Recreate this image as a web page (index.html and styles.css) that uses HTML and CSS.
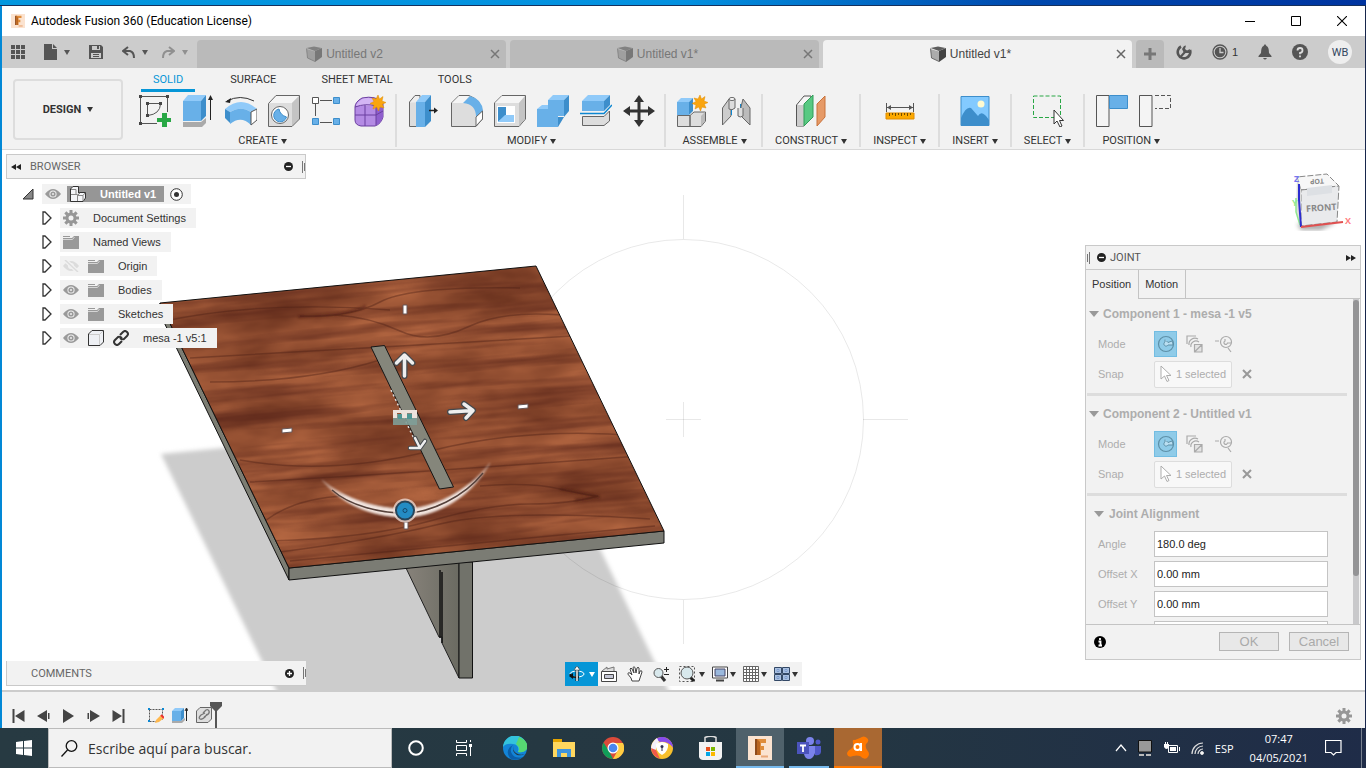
FILE: index.html
```html
<!DOCTYPE html>
<html lang="en">
<head>
    <meta charset="UTF-8">
    <meta name="viewport" content="width=device-width, initial-scale=1.0">
    <title>Autodesk Fusion 360 (Education License)</title>
    <link rel="stylesheet" href="styles.css">
</head>
<body>
    <!-- Shared icons -->
    <svg class="defs" aria-hidden="true">
        <symbol id="cube" viewBox="0 0 16 16"><path d="M.5 2 8 .5 15.500 2 9 5z" fill="currentColor" opacity=".85"/><path d="M.5 3 9 5.500V15.500L1.500 12z" fill="currentColor" opacity=".4"/><path d="M9 5 16 2V11L9 16z" fill="currentColor"/><path d="M.5 2.500 1.500 12 9 15.500" fill="none" stroke="currentColor" opacity=".7"/></symbol>
        <symbol id="close" viewBox="0 0 10 10"><path d="M1 1 9 9M9 1 1 9" stroke="currentColor" stroke-width="1.500" fill="none"/></symbol>
        <symbol id="eye" viewBox="0 0 16 12"><path d="M0 6Q8-4 16 6 8 16 0 6z" fill="#9a9a9a"/><circle cx="8" cy="6" r="3.600" fill="#eee"/><circle cx="8" cy="6" r="2.600" fill="#9a9a9a"/><circle cx="8" cy="6" r="1" fill="#eee"/></symbol>
        <symbol id="eye-off" viewBox="0 0 16 12"><path d="M0 6Q8-4 16 6 8 16 0 6z" fill="#dcdcdc"/><circle cx="8" cy="6" r="3" fill="#f2f2f2"/><circle cx="8" cy="6" r="1.600" fill="#dcdcdc"/><path d="M2 0 15 12" stroke="#f2f2f2" stroke-width="4"/><path d="M2 0 15 12" stroke="#dcdcdc" stroke-width="1.500"/></symbol>
        <symbol id="folder" viewBox="0 0 16 13"><path d="M0 0H7V1H0zM0 2H9L11 0H16V13H0z" fill="#999"/><path d="M0 3.500H9.500L11.500 1" stroke="#d5d5d5" fill="none"/></symbol>
        <symbol id="gear" viewBox="0 0 16 16"><g fill="#979797"><circle cx="8" cy="8" r="5.500"/><path d="M6.500 0H9.500V16H6.500zM0 6.500H16V9.500H0z"/><path d="M6.500 0H9.500V16H6.500zM0 6.500H16V9.500H0z" transform="rotate(45 8 8)"/></g><circle cx="8" cy="8" r="2.500" fill="#f2f2f2"/></symbol>
        <symbol id="expand" viewBox="0 0 10 14"><path d="M1 1 3 1 9 7 3 13 1 13z" fill="#fff" stroke="#333" stroke-width="1.300"/></symbol>
        <symbol id="minus-dot" viewBox="0 0 9 9"><circle cx="4.500" cy="4.500" r="4.500" fill="#222"/><path d="M2 4.500H7" stroke="#fff" stroke-width="1.300"/></symbol>
        <symbol id="plus-dot" viewBox="0 0 9 9"><circle cx="4.500" cy="4.500" r="4.500" fill="#222"/><path d="M2 4.500H7M4.500 2V7" stroke="#fff" stroke-width="1.300"/></symbol>
        <symbol id="dbl" viewBox="0 0 10 6"><path d="M0 0 5 3 0 6zM5 0 10 3 5 6z" fill="#222"/></symbol>
        <symbol id="grip" viewBox="0 0 3 12"><path d="M.5 0V12M2.500 2V10" stroke="#777"/></symbol>
        <symbol id="mode-simple" viewBox="0 0 18 18"><circle cx="9" cy="9" r="7.500" fill="none" stroke="#5d90a8" stroke-width="1.200"/><path d="M8 4.500V7A2.200 2.200 0 1 0 11 10H16A7 7 0 0 0 15 6L11 7.500 9.500 6" fill="#b9def1" stroke="#5d90a8"/></symbol>
        <symbol id="mode-between" viewBox="0 0 18 18"><g fill="none" stroke="#aaa" stroke-width="1.200"><path d="M1 9V1H10M3 10A6 6 0 0 1 12 4M5 12A5 5 0 0 1 13 7"/><path d="M8.500 9.500H16V17H8.500zM8.500 17 16 9.500" fill="#e4e4e4"/></g></symbol>
        <symbol id="mode-two" viewBox="0 0 18 18"><g fill="none" stroke="#aaa" stroke-width="1.200"><path d="M0 6H4M13 13 16 17"/><circle cx="11" cy="7" r="5.500"/><path d="M10 4V6A1.800 1.800 0 1 0 12.500 8H16"/></g></symbol>
        <symbol id="cursor" viewBox="0 0 12 18"><path d="M1 1V14L4.500 11 7 16.500 9 15.500 6.500 10.500H11z" fill="#fff" stroke="currentColor"/></symbol>
        <symbol id="fusion" viewBox="0 0 24 24"><rect width="24" height="24" fill="#fbe3d0"/><path d="M7 3H10V19H7z" fill="#8f4a1a"/><path d="M9 3H18V7H13V10H16V14H13V19H9z" fill="#df8d3c"/><path d="M9 3 12 6V19H9z" fill="#b96420"/><path d="M13 20.500H20" stroke="#e9a779" stroke-width="2"/></symbol>
        <symbol id="star" viewBox="0 0 16 16"><path d="M8 0 9.500 4 13 1.500 12 6 16 7.500 12.300 9.200 14 13 10 12 8.500 16 6.700 12 3 14 4 10 0 8.500 4 6.500 2 3 6 4z" fill="#f9a510" stroke="#e08c00" stroke-width=".5"/></symbol>
    </svg>

    <div class="desktop-edge"></div>
    <div class="window">
        <header class="titlebar">
            <svg class="app-icon" width="14" height="14"><use href="#fusion"/></svg>
            <h1>Autodesk Fusion 360 (Education License)</h1>
            <div class="window-buttons">
                <button aria-label="Minimize"><svg width="10" height="10"><path d="M0 5.500H10" stroke="#000"/></svg></button>
                <button aria-label="Maximize"><svg width="10" height="10"><path d="M.5.5H9.500V9.500H.5z" stroke="#000" fill="none"/></svg></button>
                <button aria-label="Close"><svg width="10" height="10"><path d="M0 0 10 10M10 0 0 10" stroke="#000" stroke-width="1.100"/></svg></button>
            </div>
        </header>

        <div class="tabbar">
            <div class="quick-tools">
                <button aria-label="Data panel"><svg width="14" height="14" fill="#555"><path d="M0 0h4v4H0zM5 0h4v4H5zM10 0h4v4h-4zM0 5h4v4H0zM5 5h4v4H5zM10 5h4v4h-4zM0 10h4v4H0zM5 10h4v4H5zM10 10h4v4h-4z"/></svg></button>
                <button class="with-caret" aria-label="File"><svg width="13" height="16"><path d="M0 0H8V5H13V16H0z" fill="#555"/><path d="M9 0 13 4H9z" fill="#555"/></svg><span class="caret"></span></button>
                <button aria-label="Save"><svg width="14" height="14"><path d="M0 0H12L14 2V14H0z" fill="#555"/><path d="M3 1H11V5H3zM2 8H12V13H2z" fill="#ccc"/><path d="M8 1H10V4H8zM4 9H10V10H4zM4 11H10V12H4z" fill="#555"/></svg></button>
                <button class="with-caret" aria-label="Undo"><svg width="13" height="13"><path d="M6 1 1 5 6 9M1 5H8Q12 6 12 12" fill="none" stroke="#555" stroke-width="2"/></svg><span class="caret"></span></button>
                <button class="with-caret faded" aria-label="Redo"><svg width="13" height="13"><path d="M7 1 12 5 7 9M12 5H5Q1 6 1 12" fill="none" stroke="#555" stroke-width="2"/></svg><span class="caret"></span></button>
            </div>
            <div class="doc-tabs">
                <div class="doc-tab"><a href="#v2"><svg width="16" height="16"><use href="#cube"/></svg>Untitled v2</a><button aria-label="Close Untitled v2"><svg width="10" height="10"><use href="#close"/></svg></button></div>
                <div class="doc-tab"><a href="#v1"><svg width="16" height="16"><use href="#cube"/></svg>Untitled v1*</a><button aria-label="Close Untitled v1"><svg width="10" height="10"><use href="#close"/></svg></button></div>
                <div class="doc-tab active"><a href="#v1b"><svg width="16" height="16"><use href="#cube"/></svg>Untitled v1*</a><button aria-label="Close Untitled v1"><svg width="10" height="10"><use href="#close"/></svg></button></div>
                <button class="new-tab" aria-label="New design"><svg width="12" height="12"><path d="M6 0V12M0 6H12" stroke="#777" stroke-width="3"/></svg></button>
            </div>
            <div class="account">
                <button aria-label="Extensions"><svg width="16" height="16"><path d="M5 2.500A6.300 6.300 0 1 0 14 6" fill="none" stroke="#555" stroke-width="2.600"/><path d="M3 13 7.500 8 6 5 8 2 10 1.500 9 5 11 6.500 14 5 13 9 9.500 9 5 14z" fill="#555"/></svg></button>
                <button class="jobs" aria-label="Job status"><svg width="16" height="16"><circle cx="8" cy="8" r="7" fill="none" stroke="#555" stroke-width="1.300"/><circle cx="8" cy="8" r="5.300" fill="#555"/><path d="M8 4V8.500H11.500" stroke="#ccc" stroke-width="1.300" fill="none"/></svg>1</button>
                <button aria-label="Notifications"><svg width="14" height="16"><path d="M7 0 8.500 2Q11 3 11 9L13.500 12V13H.5V12L3 9Q3 3 5.500 2zM5 14H9Q7 17 5 14z" fill="#555"/></svg></button>
                <button aria-label="Help"><svg width="16" height="16"><circle cx="8" cy="8" r="8" fill="#555"/><path d="M5.500 6.500Q5.500 4 8 4T10.500 6.300 8 9V10.300M8 11.500V13.300" fill="none" stroke="#ddd" stroke-width="1.800"/></svg></button>
                <button class="avatar">WB</button>
            </div>
        </div>

        <div class="ribbon">
            <button class="design">DESIGN <span class="caret"></span></button>
            <div class="ribbon-main">
                <nav class="ribbon-tabs">
                    <a class="active" href="#solid">SOLID</a>
                    <a href="#surface">SURFACE</a>
                    <a href="#sheet">SHEET METAL</a>
                    <a href="#tools">TOOLS</a>
                </nav>
                <div class="groups">
                    <div class="group">
                        <div class="icons">
                            <svg width="32" height="32"><path d="M2 1.500H28.500V17M1.500 2V28.500H18" fill="none" stroke="#555"/><path d="M8.500 9V20M9 8.500H20M9 20.500Q21 19 21.500 9" fill="none" stroke="#555"/><path d="M0 0h3v3H0zM27 0h3v3h-3zM0 27h3v3H0zM7 7h3v3H7zM20 7h3v3h-3zM7 19h3v3H7z" fill="#444"/><path d="M23 18h5v5h4v4h-4v5h-5v-5h-5v-4h5z" fill="#28a745"/></svg>
                            <svg width="32" height="32"><path d="M1 27H19L24 23V28L20 32H1z" fill="#aaa"/><path d="M1 6H19V26H1z" fill="#68b0e8"/><path d="M1 6 6 0H24L19 6z" fill="#90caf9"/><path d="M19 6 24 0V21L19 26z" fill="#3d8ecb"/><path d="M28.500 2V25" stroke="#222"/><path d="M28.500 0 31 5H26z" fill="#222"/></svg>
                            <svg width="32" height="32"><path d="M2 6Q15-1 29 6" fill="none" stroke="#333"/><path d="M0 7 6 3 5 8z" fill="#222"/><path d="M0 14Q16 0 32 14L26 17Q16 10 5 17z" fill="#90caf9"/><path d="M0 14 5 17V28L0 23z" fill="#3d8ecb"/><path d="M5 17Q16 10 26 17V30Q16 20 5 29z" fill="#68b0e8"/><path d="M26 17 32 14V25L26 30z" fill="#fff" stroke="#555"/></svg>
                            <svg width="32" height="32"><path d="M.5 8.500 8 1H31V24L24 31H.5z" fill="#ddd"/><path d="M1 8 8 1H31L24 8z" fill="#f5f5f5"/><path d="M24 8 31 1V24L24 31z" fill="#c4c4c4"/><path d="M.5 8.500 8 .5H31.500V24L24 31.500H.5z" fill="none" stroke="#666"/><circle cx="12" cy="20" r="8.500" fill="#fff" stroke="#666"/><path d="M11 14A6.500 6.500 0 1 0 18.500 22Q12 20 11 14z" fill="#68b0e8" stroke="#3d8ecb"/></svg>
                            <svg width="32" height="32"><path d="M9 5.500H21M4.500 9V21M9 27.500H21" stroke="#555"/><path d="M1.500 2.500H7.500V8.500H1.500z" fill="#fff" stroke="#555"/><path d="M22.500 2.500h6v6h-6zM1.500 23.500h6v6h-6zM22.500 23.500h6v6h-6z" fill="#68b0e8" stroke="#3d8ecb"/></svg>
                            <svg width="32" height="32"><path d="M1 12Q1 7 8 3 22 0 29 8V22Q27 29 21 31H7Q1 30 1 25z" fill="#b48be4" stroke="#6b3fa0"/><path d="M2 12Q2 8 8 4 18 1 26 8L21 11H3z" fill="#d3b5f4"/><path d="M22 11 29 8V22Q26 29 22 30z" fill="#8f5fcd"/><path d="M11 10V31M1 20H22L29 16M22 10V30M1 12Q12 8 22 11" fill="none" stroke="#6b3fa0"/><use href="#star" x="16" y="0" width="16" height="16"/></svg>
                        </div>
                        <button>CREATE <span class="caret"></span></button>
                    </div>
                    <div class="group">
                        <div class="icons">
                            <svg width="32" height="32"><path d="M1.500 7 7 .5H12V31.500H1.500z" fill="#eee" stroke="#666"/><path d="M2 7.500H8V31H2z" fill="#ddd"/><path d="M8 7H17V32H8z" fill="#68b0e8"/><path d="M8 7 14 0H23L17 7z" fill="#90caf9"/><path d="M17 7 23 0V26L17 32z" fill="#3d8ecb"/><path d="M21 15.500H28" stroke="#222" stroke-width="1.500"/><path d="M26 12.500 30 15.500 26 18.500z" fill="#222"/></svg>
                            <svg width="32" height="32"><path d="M.5 8 8 .5H18Q31 5 31.500 20V24L25 31.500H.5z" fill="#ddd" stroke="#666"/><path d="M1 8 8 1H18L13 8z" fill="#f5f5f5"/><path d="M12 8 19 1Q31 4 32 16L25 22Q25 9 12 8z" fill="#68b0e8"/><path d="M25 22 31.500 16V24L25 31z" fill="#fff" stroke="#666"/></svg>
                            <svg width="32" height="32"><path d="M.5 8 8 .5H31.500V24L25 31.500H.5z" fill="#ddd" stroke="#666"/><path d="M1 8 8 1H31L25 8z" fill="#f5f5f5"/><path d="M25 8 31 1V24L25 31z" fill="#c4c4c4"/><path d="M3 11H21V28H3z" fill="#fff"/><path d="M4 12H12V20L4 27z" fill="#3d8ecb"/><path d="M4 27 11 20H20V27z" fill="#90caf9"/></svg>
                            <svg width="32" height="32"><path d="M11 5H27V21H21V32H0V14H11z" fill="#68b0e8"/><path d="M11 5 16 0H32L27 5zM0 14 5 10H11V14z" fill="#90caf9"/><path d="M27 5 32 0V16L27 22zM21 22H27L21 32z" fill="#3d8ecb"/></svg>
                            <svg width="32" height="32"><path d="M2 6H24V16H2z" fill="#68b0e8"/><path d="M2 6 8 0H30L24 6z" fill="#90caf9"/><path d="M24 6 30 0V10L24 16z" fill="#3d8ecb"/><path d="M0 18.500H24L32 10" fill="none" stroke="#0d87d1" stroke-width="1.500"/><path d="M2.500 21.500H24L29.500 16V26L24 30.500H2.500z" fill="#ddd" stroke="#666"/></svg>
                            <svg width="32" height="32"><path d="M16 4V28M4 16H28" stroke="#333" stroke-width="3"/><path d="M16 0 21 7H11zM16 32 11 25H21zM0 16 7 11V21zM32 16 25 11V21z" fill="#333"/></svg>
                        </div>
                        <button>MODIFY <span class="caret"></span></button>
                    </div>
                    <div class="group">
                        <div class="icons">
                            <svg width="32" height="32"><path d="M.5 20.500H13V31.500H.5zM13 20.500 17 17H28.500V26L24 31.500H13z" fill="#ddd" stroke="#666"/><path d="M24 21 28 17V26L24 31z" fill="#bbb"/><path d="M0 7H12V20H0z" fill="#68b0e8"/><path d="M0 7 4 3H16L12 7z" fill="#90caf9"/><path d="M12 7 16 3V16L12 20z" fill="#3d8ecb"/><use href="#star" x="15" y="0" width="16" height="16"/></svg>
                            <svg width="32" height="32"><path d="M2.500 13 9 4 11 5V21L2.500 30z" fill="#ccc" stroke="#666"/><path d="M9 4V14Q12 16 15 13V4" fill="#ddd" stroke="#666"/><ellipse cx="12" cy="4" rx="3" ry="1.500" fill="#fff" stroke="#666"/><path d="M11.500 15V20M20.500 9V13" stroke="#0d87d1"/><path d="M23 4 30 13V30L21 21V12z" fill="#bbb" stroke="#666"/><path d="M18 13V21Q20 23 23 21V13" fill="#ddd" stroke="#666"/></svg>
                        </div>
                        <button>ASSEMBLE <span class="caret"></span></button>
                    </div>
                    <div class="group single">
                        <div class="icons">
                            <svg width="32" height="32"><path d="M1.500 10 9 1H16V24L9 31H1.500z" fill="#f5f5f5" stroke="#555"/><path d="M2 10H9V31H2z" fill="#ccc"/><path d="M9 9 18 0V22L9 31z" fill="#58c982" stroke="#319c58"/><path d="M22 9 30 1V22L22 31z" fill="#e69a67" stroke="#c9723b"/></svg>
                        </div>
                        <button>CONSTRUCT <span class="caret"></span></button>
                    </div>
                    <div class="group single">
                        <div class="icons">
                            <svg width="32" height="32"><path d="M2.500 8V17M29.500 8V17M3 12.500H29" stroke="#555"/><path d="M3 12.500 7 10V15zM29 12.500 25 10V15z" fill="#555"/><path d="M2 18H30V24H2z" fill="#fca900" stroke="#e08c00"/><path d="M5.500 18V21M8.500 18V20M11.500 18V21M14.500 18V20M17.500 18V21M20.500 18V20M23.500 18V21M26.500 18V20" stroke="#704c00"/></svg>
                        </div>
                        <button>INSPECT <span class="caret"></span></button>
                    </div>
                    <div class="group single">
                        <div class="icons">
                            <svg width="32" height="32"><path d="M2 1.500H30V30.500H2z" fill="#83caff" stroke="#3d8ecb"/><path d="M2 23Q7 11 12 13L19 21Q23 14 30 25V30H2z" fill="#3d8ecb"/><circle cx="22" cy="9" r="3.500" fill="#fffbd0"/></svg>
                        </div>
                        <button>INSERT <span class="caret"></span></button>
                    </div>
                    <div class="group single">
                        <div class="icons">
                            <svg width="32" height="32"><path d="M1.500 1H28.500V22.500H1.500z" fill="none" stroke="#28a745" stroke-dasharray="4 2"/><path d="M22 15V29L25 26 28 32 30 31 27.500 25.500H31.500z" fill="#fff" stroke="#333"/></svg>
                        </div>
                        <button>SELECT <span class="caret"></span></button>
                    </div>
                    <div class="group last">
                        <div class="icons">
                            <svg width="32" height="32"><path d="M.5.5H13V31.500H.5z" fill="#f4f4f4" stroke="#555"/><path d="M13.500.5H31.500V13.500H13.500z" fill="#68b0e8" stroke="#3d8ecb"/></svg>
                            <svg width="32" height="32"><path d="M.5.5H13V31.500H.5z" fill="#f4f4f4" stroke="#555"/><path d="M16 .5H31.500V13.500H16" fill="none" stroke="#555" stroke-dasharray="4 2"/></svg>
                        </div>
                        <button>POSITION <span class="caret"></span></button>
                    </div>
                </div>
            </div>
        </div>

        <main class="viewport">
            <svg class="scene" viewBox="2 150 1363 540" preserveAspectRatio="xMinYMin slice" role="img" aria-label="Table model">
                <defs>
                    <filter id="wood" x="0" y="0" width="100%" height="100%" color-interpolation-filters="sRGB">
                        <feTurbulence type="fractalNoise" baseFrequency=".009 .025" numOctaves="4" seed="8"/>
                        <feColorMatrix values=".42 0 0 0 .38  .3 0 0 0 .17  .2 0 0 0 .1  0 0 0 0 1"/>
                    </filter>
                    <filter id="grain" x="0" y="0" width="100%" height="100%" color-interpolation-filters="sRGB">
                        <feTurbulence type="fractalNoise" baseFrequency=".006 .09" numOctaves="3" seed="21"/>
                        <feColorMatrix values="0 0 0 0 .33  0 0 0 0 .13  0 0 0 0 .09  1.500 0 0 0 -.63"/>
                    </filter>
                    <filter id="soft" x="-5%" y="-5%" width="110%" height="110%"><feGaussianBlur stdDeviation="2"/></filter>
                    <filter id="glow" x="-20%" y="-40%" width="140%" height="180%"><feGaussianBlur stdDeviation="1"/></filter>
                    <clipPath id="top"><path d="M160 303 536 266 664 531 289 568z"/></clipPath>
                    <linearGradient id="leg" x1="0" x2="1"><stop offset="0" stop-color="#87827a"/><stop offset="1" stop-color="#6b6b62"/></linearGradient>
                    <linearGradient id="fade" x1="0" x2="1"><stop offset="0" stop-color="#fff" stop-opacity=".2"/><stop offset=".15" stop-color="#f2e4de"/><stop offset=".85" stop-color="#f2e4de"/><stop offset="1" stop-color="#fff" stop-opacity=".2"/></linearGradient>
                </defs>
                <path d="M161 454 536 418 601 551 671 696H279z" fill="#ccc" filter="url(#soft)"/>
                <g fill="none" stroke="#000" stroke-opacity=".09">
                    <circle cx="683.500" cy="419.500" r="180"/>
                    <path d="M683.500 195V239M683.500 600V644M863 419.500H908M666 419.500H701M683.500 402V437"/>
                </g>
                <path d="M406 568 459 562V678L442 643V637L439 637z" fill="url(#leg)" stroke="#222"/>
                <path d="M459 562H472.500V678H459z" fill="#71726a" stroke="#111"/>
                <path d="M440 570V638M442 572V643" stroke="#111" stroke-width="1.500"/>
                <path d="M160 303V314L289 580V568z" fill="#7c7d73" stroke="#111"/>
                <path d="M289 568 664 531V543L289 580z" fill="#7b7c74" stroke="#111"/>
                <g clip-path="url(#top)">
                    <g transform="rotate(-5 400 420)">
                        <rect x="100" y="220" width="620" height="400" filter="url(#wood)"/>
                        <rect x="100" y="220" width="620" height="400" filter="url(#grain)"/>
                    </g>
                    <g fill="none" stroke="#4c2016" stroke-width="1.500" opacity=".4">
                        <path d="M300 316Q350 318 380 302T520 288M335 315Q370 317 400 331T470 326T590 318"/>
                        <path d="M160 322Q260 300 390 310M190 358Q290 352 400 346T590 335M210 382Q310 382 380 360"/>
                        <path d="M240 460Q330 476 430 451T640 436M250 482Q360 476 500 466T640 456"/>
                        <path d="M265 521Q295 498 345 496M480 486Q530 482 560 489T598 496Q570 504 530 504T430 521T270 541"/>
                        <path d="M280 552Q380 539 440 524T650 519M290 561Q430 548 655 526"/>
                    </g>
                    <path d="M298 317Q345 316 366 306M560 489Q585 493 600 497M575 500 600 497" fill="none" stroke="#45190f" stroke-width="3" opacity=".45" filter="url(#glow)"/>
                </g>
                <path d="M160 303 536 266 664 531 289 568z" fill="none" stroke="#111"/>
                <path d="M371 347 384.500 345.500 453.500 487 439.500 489z" fill="#85867b" stroke="#161616"/>
                <path d="M391 390 415 441" stroke="#ddd" stroke-width="1.500" stroke-dasharray="2 3"/>
                <path d="M393 410H417V418H412V413H407V418H402V413H397V418H393z" fill="#ede3dd"/>
                <path d="M393 418H397V414H402V418H407V414H412V418H417V425H393z" fill="#7f9f98" opacity=".9"/>
                <path d="M398 414H402V419H398zM407 414H412V419H407z" fill="#4f9795"/>
                <g fill="none" stroke-linecap="round" stroke-linejoin="round">
                    <g stroke="#44484c" stroke-width="6"><path d="M404.500 376V356M396.500 363 404.500 355 412.500 363"/><path d="M450 412 473 410.500M464 404 473 410.500 466 418"/></g>
                    <g stroke="#eee" stroke-width="3.500"><path d="M404.500 376V356M396.500 363 404.500 355 412.500 363"/><path d="M450 412 473 410.500M464 404 473 410.500 466 418"/></g>
                    <path d="M415 438 420 448M410 448 420 448 425 441" stroke="#44484c" stroke-width="4.500"/>
                    <path d="M415 438 420 448M410 448 420 448 425 441" stroke="#eee" stroke-width="2.500"/>
                </g>
                <g fill="#fff" stroke="#655"><path d="M403 305H407V314H403z"/><path d="M518 405 528 404V408L518 409z"/><path d="M282 429 292 428V432L282 433z"/><path d="M404 522H408V529H404z"/></g>
                <path d="M322 480C345 508 378 517 405 517S470 500 490 463C468 492 432 509 405 509S345 500 322 480z" fill="url(#fade)" stroke="url(#fade)" stroke-width="1" filter="url(#glow)"/>
                <path d="M332 490C350 506 380 513 405 513S464 497 483 473" fill="none" stroke="#56423c" stroke-width="1.500"/>
                <circle cx="405" cy="510.500" r="12" fill="#f0dfd8" opacity=".75"/>
                <circle cx="405" cy="510.500" r="9" fill="#248cc4" stroke="#27455a" stroke-width="2"/>
                <circle cx="405" cy="510.500" r="2" fill="none" stroke="#15486c"/>
            </svg>

            <aside class="left-panels">
                <section class="browser">
                    <header class="panel-bar">
                        <svg class="flip" width="10" height="6"><use href="#dbl"/></svg>
                        <h2>BROWSER</h2>
                        <svg width="9" height="9"><use href="#minus-dot"/></svg>
                        <svg width="3" height="12"><use href="#grip"/></svg>
                    </header>
                    <ul class="tree">
                        <li class="root"><svg width="12" height="12"><path d="M11 1V11H1z" fill="#888" stroke="#333"/></svg>
                            <span class="chip"><svg width="16" height="12"><use href="#eye"/></svg>
                                <span class="selected"><svg width="16" height="16"><path d="M.5 3 3 .5H8.500V7L10 6.500H15.500V12L13 15.500H.5z" fill="#f4f5f8" stroke="#333"/><path d="M1 8.500H7.500V15M7.500 9.500 10 7M7.500 9.500H13V15M13 9.500 15 7M1 3.500H6V8" stroke="#888" fill="none"/></svg>Untitled v1</span>
                                <svg width="13" height="13"><circle cx="6.500" cy="6.500" r="5.800" fill="#fff" stroke="#333"/><circle cx="6.500" cy="6.500" r="2.500" fill="#333"/></svg>
                            </span></li>
                        <li><svg width="10" height="14"><use href="#expand"/></svg><span class="chip"><svg width="16" height="16"><use href="#gear"/></svg><span class="name">Document Settings</span></span></li>
                        <li><svg width="10" height="14"><use href="#expand"/></svg><span class="chip"><svg width="16" height="13"><use href="#folder"/></svg><span class="name">Named Views</span></span></li>
                        <li><svg width="10" height="14"><use href="#expand"/></svg><span class="chip"><svg width="16" height="12"><use href="#eye-off"/></svg><svg width="16" height="13"><use href="#folder"/></svg><span class="name">Origin</span></span></li>
                        <li><svg width="10" height="14"><use href="#expand"/></svg><span class="chip"><svg width="16" height="12"><use href="#eye"/></svg><svg width="16" height="13"><use href="#folder"/></svg><span class="name">Bodies</span></span></li>
                        <li><svg width="10" height="14"><use href="#expand"/></svg><span class="chip"><svg width="16" height="12"><use href="#eye"/></svg><svg width="16" height="13"><use href="#folder"/></svg><span class="name">Sketches</span></span></li>
                        <li><svg width="10" height="14"><use href="#expand"/></svg><span class="chip"><svg width="16" height="12"><use href="#eye"/></svg><svg width="16" height="16"><path d="M.5 4 4 .5H15.500V12L12 15.500H.5z" fill="#eef0f4" stroke="#333"/><path d="M1 4.500H11.500V15M11.500 4.500 15 1" fill="none" stroke="#ccc"/></svg><svg width="16" height="16" fill="none" stroke="#333" stroke-width="2"><path d="M7 5 10 2Q12 0 14 2T14 6L11 9Q9 10 7 8M9 11 6 14Q4 16 2 14T2 10L5 7Q7 6 9 8"/></svg><span class="name">mesa -1 v5:1</span></span></li>
                    </ul>
                </section>
                <section class="comments panel-bar">
                    <h2>COMMENTS</h2>
                    <svg width="9" height="9"><use href="#plus-dot"/></svg>
                    <svg width="3" height="12"><use href="#grip"/></svg>
                </section>
            </aside>

            <div class="nav-tools">
                <button class="orbit" aria-label="Orbit"><svg width="16" height="16"><ellipse cx="8" cy="8" rx="7" ry="3" fill="none" stroke="#fff"/><path d="M1 8Q2 12 10 11" fill="none" stroke="#111" stroke-width="1.500"/><path d="M0 10 4 7V13z" fill="#111"/><path d="M8 1V15" stroke="#111" stroke-width="3"/><path d="M8 1V15" stroke="#fff" stroke-width="1.500"/><path d="M5 4 8 0 11 4z" fill="#fff" stroke="#333" stroke-width=".5"/></svg><span class="caret"></span></button>
                <button aria-label="Look at"><svg width="16" height="16"><path d="M.5 5.500H15.500V15.500H.5z" fill="#fff" stroke="#444"/><path d="M3.500 8.500H12.500V12.500H3.500z" fill="#c3c5d4" stroke="#444"/><path d="M1 5 6 1V3L13 1V5" fill="#ddd" stroke="#777"/></svg></button>
                <button aria-label="Pan"><svg width="16" height="16"><path d="M5 15 4 12 .8 8Q1 6 3 7L5 9 3 3Q4 1 5 3L7 7 6 1.500Q7 0 8 1.500L9 7 10 2Q11 .5 12 2V8L13 5Q15 4 15 6L13 12 12 15z" fill="#fff" stroke="#444"/></svg></button>
                <button aria-label="Zoom"><svg width="16" height="16"><path d="M8 10 12 15" stroke="#333" stroke-width="3"/><circle cx="5.500" cy="7" r="4.500" fill="#d8e8ec" stroke="#555"/><path d="M11 3.500H16M13.500 1V6M11 8.500H16" stroke="#222"/></svg></button>
                <button class="with-caret" aria-label="Fit"><svg width="16" height="16"><path d="M.5.5H15.500V15.500H.5z" fill="none" stroke="#555" stroke-dasharray="2 2"/><path d="M11 11 15 15" stroke="#222" stroke-width="3"/><circle cx="8" cy="7" r="6" fill="#d8e8ec" stroke="#555"/></svg><span class="caret"></span></button>
                <button class="with-caret tight" aria-label="Display settings"><svg width="16" height="16"><path d="M.5 1H15.500V12H.5z" fill="#fff" stroke="#444"/><path d="M3 3H13V10H3z" fill="#9bb9dd" stroke="#446"/><path d="M4 14.500H12" stroke="#444" stroke-width="2"/></svg><span class="caret"></span></button>
                <button class="with-caret tight" aria-label="Grid and snaps"><svg width="16" height="16"><path d="M.5.5H15.500V15.500H.5zM3.500 0V16M6.500 0V16M9.500 0V16M12.500 0V16M0 3.500H16M0 6.500H16M0 9.500H16M0 12.500H16" fill="#fff" stroke="#666"/></svg><span class="caret"></span></button>
                <button class="with-caret tight" aria-label="Viewports"><svg width="16" height="14"><path d="M.5.500h7v6h-7zM8.500.500h7v6h-7zM.5 7.500h7v6h-7zM8.500 7.500h7v6h-7z" fill="#a9c0e0" stroke="#334866"/><path d="M3 2.500h2v2h-2zM11 2.500h2v2h-2zM3 9.500h2v2h-2zM11 9.500h2v2h-2z" fill="#c5d6ee" stroke="#7b9acc"/></svg><span class="caret"></span></button>
            </div>

            <aside class="right-panels">
                <svg class="viewcube" width="64" height="62" viewBox="1291 170 64 62">
                    <path d="M1298 224 1338 222 1344 219 1322 230 1302 230z" fill="#aaa" filter="url(#soft)"/>
                    <path d="M1302 190 1298 177 1328 174 1340 186z" fill="#f7f7f7" stroke="#888" stroke-dasharray="6 2"/>
                    <path d="M1302 190 1340 186 1338 222 1302 226z" fill="#e9eaec" stroke="#888" stroke-dasharray="7 2"/>
                    <path d="M1298 177 1302 190V226L1297 212z" fill="#ddd"/>
                    <path d="M1308 188 1333 185V193L1308 196z" fill="#dde0e4"/>
                    <path d="M1297 198V212L1301 225" fill="none" stroke="#8fe88f" stroke-width="1.500"/>
                    <path d="M1300 184V200L1302 227" stroke="#2c2cd0" stroke-width="2" fill="none"/>
                    <path d="M1302 227 1344 222" stroke="#e05050" stroke-width="2"/>
                    <g class="cube-text">
                        <text x="1307" y="211" transform="rotate(-4 1320 208)">FRONT</text>
                        <text class="cube-top" x="1309" y="185" transform="rotate(176 1317 182)">TOP</text>
                        <text class="axis-z" x="1295" y="182">Z</text>
                        <text class="axis-y" x="1293" y="206">Y</text>
                        <text class="axis-x" x="1346" y="224">X</text>
                    </g>
                </svg>
                <section class="joint">
                    <header><svg width="3" height="12" class="flip"><use href="#grip"/></svg><svg width="9" height="9"><use href="#minus-dot"/></svg><h2>JOINT</h2><svg width="10" height="6"><use href="#dbl"/></svg></header>
                    <nav><a class="active" href="#position">Position</a><a href="#motion">Motion</a></nav>
                    <div class="joint-body">
                        <div class="joint-fields">
                            <h3><span class="caret"></span>Component 1 - mesa -1 v5</h3>
                            <div class="field"><span>Mode</span><div class="modes"><button class="on" aria-label="Simple"><svg width="18" height="18"><use href="#mode-simple"/></svg></button><button aria-label="Between two faces"><svg width="18" height="18"><use href="#mode-between"/></svg></button><button aria-label="Two edges"><svg width="18" height="18"><use href="#mode-two"/></svg></button></div></div>
                            <div class="field"><span>Snap</span><button class="snap"><svg width="12" height="18"><use href="#cursor"/></svg>1 selected</button><button class="clear" aria-label="Clear"><svg width="10" height="10"><path d="M1 1 9 9M9 1 1 9" stroke="#999" stroke-width="2"/></svg></button></div>
                            <hr>
                            <h3><span class="caret"></span>Component 2 - Untitled v1</h3>
                            <div class="field"><span>Mode</span><div class="modes"><button class="on" aria-label="Simple"><svg width="18" height="18"><use href="#mode-simple"/></svg></button><button aria-label="Between two faces"><svg width="18" height="18"><use href="#mode-between"/></svg></button><button aria-label="Two edges"><svg width="18" height="18"><use href="#mode-two"/></svg></button></div></div>
                            <div class="field"><span>Snap</span><button class="snap"><svg width="12" height="18"><use href="#cursor"/></svg>1 selected</button><button class="clear" aria-label="Clear"><svg width="10" height="10"><path d="M1 1 9 9M9 1 1 9" stroke="#999" stroke-width="2"/></svg></button></div>
                            <hr>
                            <h3 class="nested"><span class="caret"></span>Joint Alignment</h3>
                            <div class="field"><label for="angle">Angle</label><input id="angle" value="180.0 deg"></div>
                            <div class="field"><label for="offx">Offset X</label><input id="offx" value="0.00 mm"></div>
                            <div class="field"><label for="offy">Offset Y</label><input id="offy" value="0.00 mm"></div>
                            <div class="field"><span></span><input aria-label="Offset Z"></div>
                        </div>
                        <div class="scroll"><div class="thumb"></div></div>
                    </div>
                    <footer>
                        <svg width="12" height="12"><circle cx="6" cy="6" r="6" fill="#000"/><path d="M6 2V4M4.500 5.500H6.500V9M4.500 9.500H8" stroke="#fff" stroke-width="1.800" fill="none"/></svg>
                        <button disabled>OK</button><button disabled>Cancel</button>
                    </footer>
                </section>
            </aside>
        </main>

        <div class="timeline">
            <div class="playback">
                <button aria-label="Start"><svg width="13" height="14"><path d="M.5 0H2.500V14H.5zM12.500 1V13L3 7z" fill="#444"/></svg></button>
                <button aria-label="Step back"><svg width="13" height="14"><path d="M10 1V13L0 7zM11 4H12.500V10H11z" fill="#444"/></svg></button>
                <button aria-label="Play"><svg width="13" height="14"><path d="M1 0 12 7 1 14z" fill="#444"/></svg></button>
                <button aria-label="Step forward"><svg width="13" height="14"><path d="M3 1V13L13 7zM.5 4H2V10H.5z" fill="#444"/></svg></button>
                <button aria-label="End"><svg width="13" height="14"><path d="M10.500 0H12.500V14H10.500zM.5 1V13L10 7z" fill="#444"/></svg></button>
            </div>
            <div class="features">
                <svg width="16" height="20"><path d="M1.500 3.500H14.500V14M1.500 3.500V15.500H9" fill="none" stroke="#555" stroke-dasharray="2 1"/><path d="M0 2h2v2H0zM14 2h2v2h-2zM0 14h2v2H0z" fill="#0d87d1"/><path d="M7 17 8 14 13 9 16 12 11 16z" fill="#ffb84d"/><path d="M13 9 16 12" stroke="#e33" stroke-width="2"/></svg>
                <svg width="16" height="20"><path d="M0 15H9L13 12V14L10 17H0z" fill="#aaa"/><path d="M0 5H9V15H0z" fill="#68b0e8"/><path d="M0 5 3 2H12L9 5z" fill="#90caf9"/><path d="M9 5 12 2V12L9 15z" fill="#3d8ecb"/><path d="M14.500 3V15M13 5 14.500 2 16 5" stroke="#222" fill="none"/></svg>
                <svg width="30" height="30" viewBox="0 -5 30 30"><path d="M.5 5 4 1.500H15.500V13L12 16.500H.5z" fill="#ddd" stroke="#666"/><path d="M7 7 10 4Q12 3 13 5T11 9L8 11M9 7 5 9Q2 12 4 13T9 11L11 8" fill="none" stroke="#777" stroke-width="1.300"/><path d="M14-4H26V0L21 5V25H19V5L14 0z" fill="#555"/></svg>
            </div>
            <button class="settings" aria-label="Timeline settings"><svg width="16" height="16"><use href="#gear"/></svg></button>
        </div>
    </div>

    <footer class="taskbar">
        <button class="start" aria-label="Inicio"><svg width="16" height="16" fill="#fff"><path d="M0 2 7 1V7.500H0zM8 1 16 0V7.500H8zM0 8.500H7V15L0 14zM8 8.500H16V16L8 15z"/></svg></button>
        <label class="search"><svg width="17" height="17"><circle cx="10.500" cy="6" r="5.300" fill="none" stroke="#111" stroke-width="1.300"/><path d="M6.500 10 .5 16.500" stroke="#111" stroke-width="1.300"/></svg><input type="search" placeholder="Escribe aquí para buscar." aria-label="Buscar"></label>
        <div class="system">
            <button aria-label="Cortana"><svg width="16" height="16"><circle cx="8" cy="8" r="6.800" fill="none" stroke="#fff" stroke-width="2"/></svg></button>
            <button aria-label="Vista de tareas"><svg width="16" height="16" fill="none" stroke="#fff"><path d="M.5 0V2.500H10.500V0M.5 5.500H10.500V10.500H.5zM.5 16V13.500H10.500V16M14.500 0V2M14.500 7V16"/><path d="M13 4H16V7H13z" fill="#fff" stroke="none"/></svg></button>
        </div>
        <div class="apps">
            <button aria-label="Edge"><svg width="24" height="24"><circle cx="12" cy="12" r="12" fill="#1384d7"/><path d="M0 11A12 12 0 0 1 24 12Q22 17 15 16 17 9 10 8 3 7 0 11z" fill="#34c3dc"/><path d="M16 1Q26 5 24 13 21 17 15 16 18 12 13 8z" fill="#56d772"/><path d="M10 9Q6 13 9 18T20 21Q15 25 8 23 2 17 7 11z" fill="#0b5ea8"/><path d="M11 10Q9 14 13 17T22 18Q19 20 14 19 8 15 11 10z" fill="#253842"/></svg></button>
            <button aria-label="Explorador de archivos"><svg width="22" height="18"><path d="M0 0H9V3H22V18H0z" fill="#e6a500"/><path d="M0 3H22V18H0z" fill="#ffd75e"/><path d="M4 18V10H18V18H14V14H8V18z" fill="#3f94dc"/></svg></button>
            <button aria-label="Chrome"><svg width="22" height="22"><circle cx="11" cy="11" r="11" fill="#db4a3a"/><path d="M1.500 5.500 7 14 11 22A11 11 0 0 1 1.500 5.500z" fill="#109d59"/><path d="M11 6H21A11 11 0 0 1 11 22L16 13z" fill="#ffcd42"/><circle cx="11" cy="11" r="5.500" fill="#fff"/><circle cx="11" cy="11" r="4.300" fill="#4a86ee"/></svg></button>
            <button aria-label="Avast Secure Browser"><svg width="22" height="22"><circle cx="11" cy="11" r="11" fill="#f7c02d"/><path d="M5 2A11 11 0 0 1 22 11Q20 5 13 4 8 3 5 5z" fill="#7b43e8"/><path d="M5 2Q10-1 15 1 21 4 22 10 16 4 9 5z" fill="#884ced"/><path d="M6 1Q0 5 0 12L5 16Q4 9 8 5z" fill="#f5f0fa"/><path d="M0 11Q1 19 9 22L5 13z" fill="#f0584b"/><path d="M5 7Q11 3 17 7 18 14 11 18 4 14 5 7z" fill="#fff"/><circle cx="11" cy="9.500" r="1.500" fill="#335"/><path d="M11 9V14" stroke="#335"/></svg></button>
            <button aria-label="Microsoft Store"><svg width="24" height="24"><path d="M6 6V1.500Q12-1 17 1.500V6" fill="none" stroke="#ddd" stroke-width="1.500"/><path d="M0 6H23V21Q22 24 19 24H4Q1 24 0 21z" fill="#f3f3f3"/><path d="M7 11H11V15H7z" fill="#e8501e"/><path d="M12 11H16V15H12z" fill="#7cb800"/><path d="M7 16H11V20H7z" fill="#05a6e5"/><path d="M12 16H16V20H12z" fill="#fcb900"/></svg></button>
            <button class="current" aria-label="Fusion 360"><svg width="24" height="24"><use href="#fusion"/></svg></button>
            <button class="open" aria-label="Teams"><svg width="24" height="22"><circle cx="13" cy="4" r="4" fill="#7b83eb"/><circle cx="21" cy="5" r="2.500" fill="#5059c9"/><path d="M16 9H24V15Q23 19 18 18z" fill="#5059c9"/><path d="M7 9H18V16Q16 22 12 22T7 17z" fill="#7b83eb"/><path d="M0 5H12V17H0z" fill="#4b53bc"/><path d="M3 8.500H9M6 8.500V15" stroke="#fff" stroke-width="1.800"/></svg></button>
            <button class="avast" aria-label="Avast"><svg width="24" height="24"><path d="M14 2Q18-1 21 2T20 8Q19 11 21 14 25 18 21 22 18 24 14 20 11 19 7 20 2 22 1 18 1 15 5 13 8 11 7 7T9 4z" fill="#ff7800"/><circle cx="11.500" cy="11" r="3" fill="none" stroke="#fff" stroke-width="2"/><path d="M15 7V15" stroke="#fff" stroke-width="2"/></svg></button>
        </div>
        <div class="tray">
            <svg width="12" height="8"><path d="M1 7 6 1 11 7" fill="none" stroke="#fff" stroke-width="1.200"/></svg>
            <svg width="15" height="16"><path d="M.5.5H13.500V12H.5z" fill="#999" stroke="#111"/><path d="M1 14H6V16H1zM8 14H13V16H8z" fill="#bbb"/></svg>
            <svg width="16" height="12"><path d="M4.500 3.500H13.500V10.500H4.500zM15.500 5V9" fill="none" stroke="#fff"/><path d="M6 5H12V9H6zM0 2H5V5Q4 7 2.500 7T0 5zM1 0H2V2H1zM3 0H4V2H3z" fill="#fff"/></svg>
            <svg width="13" height="13" fill="none" stroke="#ddd"><path d="M1 12A11 11 0 0 1 12 1M4 12A8 8 0 0 1 12 4M7 12A5 5 0 0 1 12 7" stroke-width="1.200"/><circle cx="11" cy="11" r="1.500" fill="#fff"/></svg>
            <span class="lang">ESP</span>
            <time>07:47<br>04/05/2021</time>
            <svg width="17" height="16"><path d="M.5.5H16V12.500H11L8.500 15 6 12.500H.5z" fill="none" stroke="#fff" stroke-width="1.200"/></svg>
        </div>
    </footer>
</body>
</html>
```
FILE: styles.css
```css
* {
    box-sizing: border-box;
}
body {
    margin: 0;
    height: 100vh;
    display: flex;
    flex-direction: column;
    overflow: hidden;
    font-family: "Liberation Sans", Arial, sans-serif;
    font-size: 11px;
    color: #333;
}
button {
    font: inherit;
    color: inherit;
    background: none;
    border: 0;
    padding: 0;
    display: flex;
    align-items: center;
    justify-content: center;
}
a {
    color: inherit;
    text-decoration: none;
}
h1, h2, h3, ul {
    margin: 0;
    padding: 0;
    font-size: inherit;
    font-weight: normal;
    list-style: none;
}
svg {
    display: block;
    flex: none;
}
.defs {
    position: absolute;
    width: 0;
    height: 0;
}
.flip {
    transform: scaleX(-1);
}
.caret {
    flex: none;
    border: 3px solid transparent;
    border-top: 5px solid #333;
    border-bottom: 0;
}
.desktop-edge {
    height: 6px;
    border-bottom: 1px solid #16305c;
    background: linear-gradient(90deg, #0397de, #0391e0 50%, #0049ae 75%, #0034a0);
}

/* Window */
.window {
    flex: 1;
    min-height: 0;
    display: flex;
    flex-direction: column;
    border-left: 2px solid #0288d6;
    border-right: 1px solid #17264c;
    background: #f2f2f2;
}
.titlebar {
    height: 30px;
    display: flex;
    align-items: center;
    gap: 6px;
    padding-left: 9px;
    background: #fff;
    font: 12px "Roboto", sans-serif;
    color: #000;
}
.window-buttons {
    display: flex;
    margin-left: auto;
}
.window-buttons button {
    width: 46px;
    height: 30px;
}
.tabbar {
    height: 32px;
    display: flex;
    background: #ccc;
}
.quick-tools {
    width: 195px;
    display: flex;
    align-items: center;
    gap: 19px;
    padding-left: 9px;
}
.quick-tools .caret {
    border-top-color: #555;
}
.with-caret {
    gap: 7px;
}
.quick-tools .with-caret + .with-caret {
    margin-left: -5px;
}
.faded {
    opacity: .5;
}
.doc-tabs {
    flex: 1;
    display: flex;
    gap: 4px;
    padding-top: 4px;
    font-size: 12px;
}
.doc-tab {
    flex: 1;
    display: flex;
    align-items: center;
    padding: 0 6px 0 2px;
    border-radius: 4px 4px 0 0;
    background: #bababa;
    color: #777;
}
.doc-tab a {
    flex: 1;
    display: flex;
    align-items: center;
    justify-content: center;
    gap: 4px;
}
.doc-tab.active {
    background: #f2f2f2;
    color: #666;
}
.doc-tab.active a {
    color: #444;
}
.new-tab {
    width: 28px;
    border-radius: 4px 4px 0 0;
    background: #bababa;
}
.account {
    width: 201px;
    display: flex;
    align-items: center;
    justify-content: space-between;
    padding: 0 13px 0 12px;
}
.jobs {
    gap: 4px;
}
.avatar {
    width: 24px;
    height: 24px;
    border-radius: 50%;
    background: #eee;
    color: #33475f;
    font: 11px "Roboto", sans-serif;
}

/* Ribbon */
.ribbon {
    height: 82px;
    display: flex;
    border-bottom: 1px solid #d8d8d8;
    font: 11px/12px "Roboto", sans-serif;
}
.design {
    width: 110px;
    height: 61px;
    margin: 11px 16px 0 11px;
    border: 2px solid #ddd;
    border-radius: 4px;
    font-weight: 700;
}
.ribbon-main {
    flex: 1;
}
.ribbon-tabs {
    display: flex;
    padding-left: 2px;
    gap: 39px;
    height: 24px;
}
.ribbon-tabs a {
    padding: 6px 3px 0;
}
.ribbon-tabs .active {
    padding: 6px 12px 0;
    margin-right: -7px;
    border-bottom: 3px solid #0696d7;
    color: #0696d7;
}
.groups {
    display: flex;
    padding-top: 2px;
}
.group {
    display: flex;
    flex-direction: column;
    align-items: center;
    gap: 8px;
    height: 53px;
    padding: 1px 9px 0 11px;
    border-right: 2px solid #ddd;
}
.group:first-child {
    padding-left: 0;
}
.group button, .design {
    gap: 3px;
    white-space: nowrap;
}
.design {
    gap: 6px;
}
.icons {
    display: flex;
    gap: 11px;
}
.single {
    padding: 1px 12px 0;
}
.last {
    border: 0;
    align-items: flex-start;
}
.last button {
    padding-left: 6px;
}

/* Viewport */
.viewport {
    flex: 1;
    min-height: 0;
    position: relative;
    display: grid;
    grid-template-columns: 1fr auto 1fr;
    background: #fff;
    overflow: hidden;
}
.scene {
    position: absolute;
    inset: 0;
    width: 100%;
    height: 100%;
}
.left-panels {
    position: relative;
    width: 300px;
    margin: 4px 0 4px 4px;
    display: flex;
    flex-direction: column;
    justify-content: space-between;
}
.panel-bar {
    height: 25px;
    display: flex;
    align-items: center;
    gap: 9px;
    padding: 0 0 0 4px;
    border: 1px solid #c9c9c9;
    background: #f2f2f2;
    color: #666;
    font-family: "Roboto", sans-serif;
}
.panel-bar h2 {
    flex: 1;
}
.comments {
    padding: 0 0 0 24px;
    border-width: 0 0 1px 1px;
}
.tree {
    display: grid;
    gap: 4px;
    padding-top: 5px;
}
.tree li {
    height: 20px;
    display: flex;
    align-items: center;
    gap: 8px;
    padding-left: 36px;
}
.tree .root {
    padding-left: 16px;
}
.chip {
    height: 20px;
    display: flex;
    align-items: center;
    gap: 9px;
    padding: 0 10px 0 3px;
    background: #f2f2f2;
}
.root .chip {
    gap: 6px;
    padding-right: 8px;
}
.name {
    padding-left: 5px;
}
.selected {
    height: 16px;
    display: flex;
    align-items: center;
    gap: 14px;
    padding: 0 8px 0 3px;
    background: #969696;
    color: #fff;
    font-weight: 700;
}
.nav-tools {
    position: relative;
    align-self: end;
    height: 24px;
    margin-bottom: 4px;
    display: flex;
    gap: 10px;
    padding-right: 4px;
    background: #f2f2f2;
}
.nav-tools .with-caret {
    gap: 4px;
}
.nav-tools .tight {
    gap: 2px;
    margin-left: -3px;
}
.orbit {
    width: 33px;
    gap: 4px;
    margin-right: -7px;
    background: #0696d7;
}
.orbit .caret {
    border-top-color: #fff;
}
.right-panels {
    position: relative;
    justify-self: end;
    min-height: 0;
    width: 276px;
    margin: 20px 4px 30px 0;
    display: flex;
    flex-direction: column;
}
.viewcube {
    align-self: flex-end;
    margin: 0 7px 13px 0;
}
.cube-text {
    font: 700 9px "Open Sans", sans-serif;
    fill: #888;
}
.cube-top {
    font-size: 7px;
}
.axis-x {
    fill: #ff8080;
}
.axis-y {
    fill: #8fe88f;
}
.axis-z {
    fill: #7777ee;
}

/* Joint dialog */
.joint {
    flex: 1;
    min-height: 0;
    display: flex;
    flex-direction: column;
    border: 1px solid #c9c9c9;
    background: #f2f2f2;
}
.joint header {
    height: 24px;
    display: flex;
    align-items: center;
    gap: 4px;
    padding: 0 4px 0 1px;
    border-bottom: 1px solid #c9c9c9;
    color: #555;
    font-family: "Roboto", sans-serif;
}
.joint header h2 {
    flex: 1;
}
.joint header svg:first-child {
    margin-right: 3px;
}
.joint nav {
    height: 29px;
    display: flex;
    border-bottom: 1px solid #c4c4c4;
}
.joint nav a {
    padding: 8px 7px 0 6px;
    border-right: 1px solid #c4c4c4;
}
.joint nav a.active {
    margin-bottom: -1px;
    background: #f2f2f2;
}
.joint-body {
    flex: 1;
    min-height: 0;
    display: flex;
    overflow: hidden;
    color: #adadad;
}
.joint-fields {
    flex: 1;
    padding-right: 5px;
}
.joint h3 {
    height: 30px;
    display: flex;
    align-items: center;
    gap: 4px;
    padding-left: 3px;
    font-weight: 700;
    font-size: 12px;
}
.joint h3.nested {
    padding-left: 8px;
    gap: 5px;
}
.joint h3 .caret {
    border-width: 6px 5px 0;
    border-top-color: #999;
}
.field {
    height: 30px;
    display: grid;
    grid-template-columns: 56px 78px auto;
    align-items: center;
    padding-left: 12px;
}
.field input {
    grid-column: span 2;
    width: 174px;
    height: 26px;
    padding: 0 2px;
    border: 1px solid #c4c4c4;
    background: #fff;
    font: 11px "Liberation Sans", Arial, sans-serif;
    color: #222;
}
.joint hr {
    height: 3px;
    margin: 4px 0 3px 1px;
    border: 0;
    background: #ddd;
}
.modes {
    display: flex;
    gap: 6px;
}
.modes button {
    flex: none;
    width: 23px;
    height: 26px;
}
.modes .on {
    background: #8fcbe8;
    border: 1px solid #73bde2;
}
.snap {
    height: 27px;
    gap: 4px;
    border: 1px solid #ddd;
    border-radius: 2px;
    background: #f8f8f8;
}
.clear {
    width: 10px;
    margin-left: 10px;
}
.scroll {
    width: 8px;
    background: #c9c9cb;
    border-left: 1px solid #f2f2f2;
    border-right: 1px solid #f2f2f2;
}
.thumb {
    height: 85%;
    margin-top: 1px;
    border-radius: 3px;
    background: #949496;
}
.joint footer {
    height: 35px;
    display: flex;
    align-items: center;
    gap: 10px;
    padding: 0 11px 1px 8px;
    border-top: 1px solid #c4c4c4;
    font-size: 13px;
    color: #aaa;
}
.joint footer svg {
    margin-right: auto;
}
.joint footer button {
    width: 60px;
    height: 19px;
    border: 1px solid #b5b5b5;
    background: #e8e8e8;
}

/* Timeline */
.timeline {
    height: 38px;
    display: flex;
    align-items: center;
    padding: 12px 13px 0 10px;
    border-top: 2px solid #ccc;
    overflow: hidden;
}
.playback {
    display: flex;
    gap: 12px;
}
.features {
    display: flex;
    align-items: center;
    gap: 8px;
    margin-left: 23px;
}
.settings {
    margin-left: auto;
}

/* Taskbar */
.taskbar {
    height: 40px;
    display: flex;
    background: linear-gradient(90deg, #273a42, #243742 60%, #1f2c48);
    color: #fff;
}
.start {
    width: 48px;
}
.search {
    width: 344px;
    display: flex;
    align-items: center;
    gap: 10px;
    padding-left: 12px;
    background: #f2f2f2;
    border: 1px solid #bbb;
}
.search input {
    flex: 1;
    border: 0;
    padding: 0;
    background: none;
    font: 14px "Open Sans", sans-serif;
}
.search input::placeholder {
    color: #333;
    opacity: 1;
}
.system {
    display: flex;
    margin-right: 2px;
}
.system button {
    width: 48px;
}
.apps {
    display: flex;
}
.apps button {
    width: 49px;
    border-bottom: 2px solid transparent;
    padding-top: 2px;
}
.apps .current {
    width: 48px;
    margin-left: 1px;
    background: #4f616b;
    border-color: #76b9ed;
}
.apps .open {
    width: 40px;
    margin: 0 5px;
    border-color: #76b9ed;
}
.apps .avast {
    width: 48px;
    background: #a96832;
    border-color: #ff7800;
}
.tray {
    display: flex;
    align-items: center;
    gap: 11px;
    margin-left: auto;
    margin-right: 4px;
    padding-right: 19px;
    border-right: 1px solid #77808e;
    font: 11px/19px "Open Sans", sans-serif;
}
.tray time {
    padding: 0 6px 0 5px;
    text-align: center;
}
```
